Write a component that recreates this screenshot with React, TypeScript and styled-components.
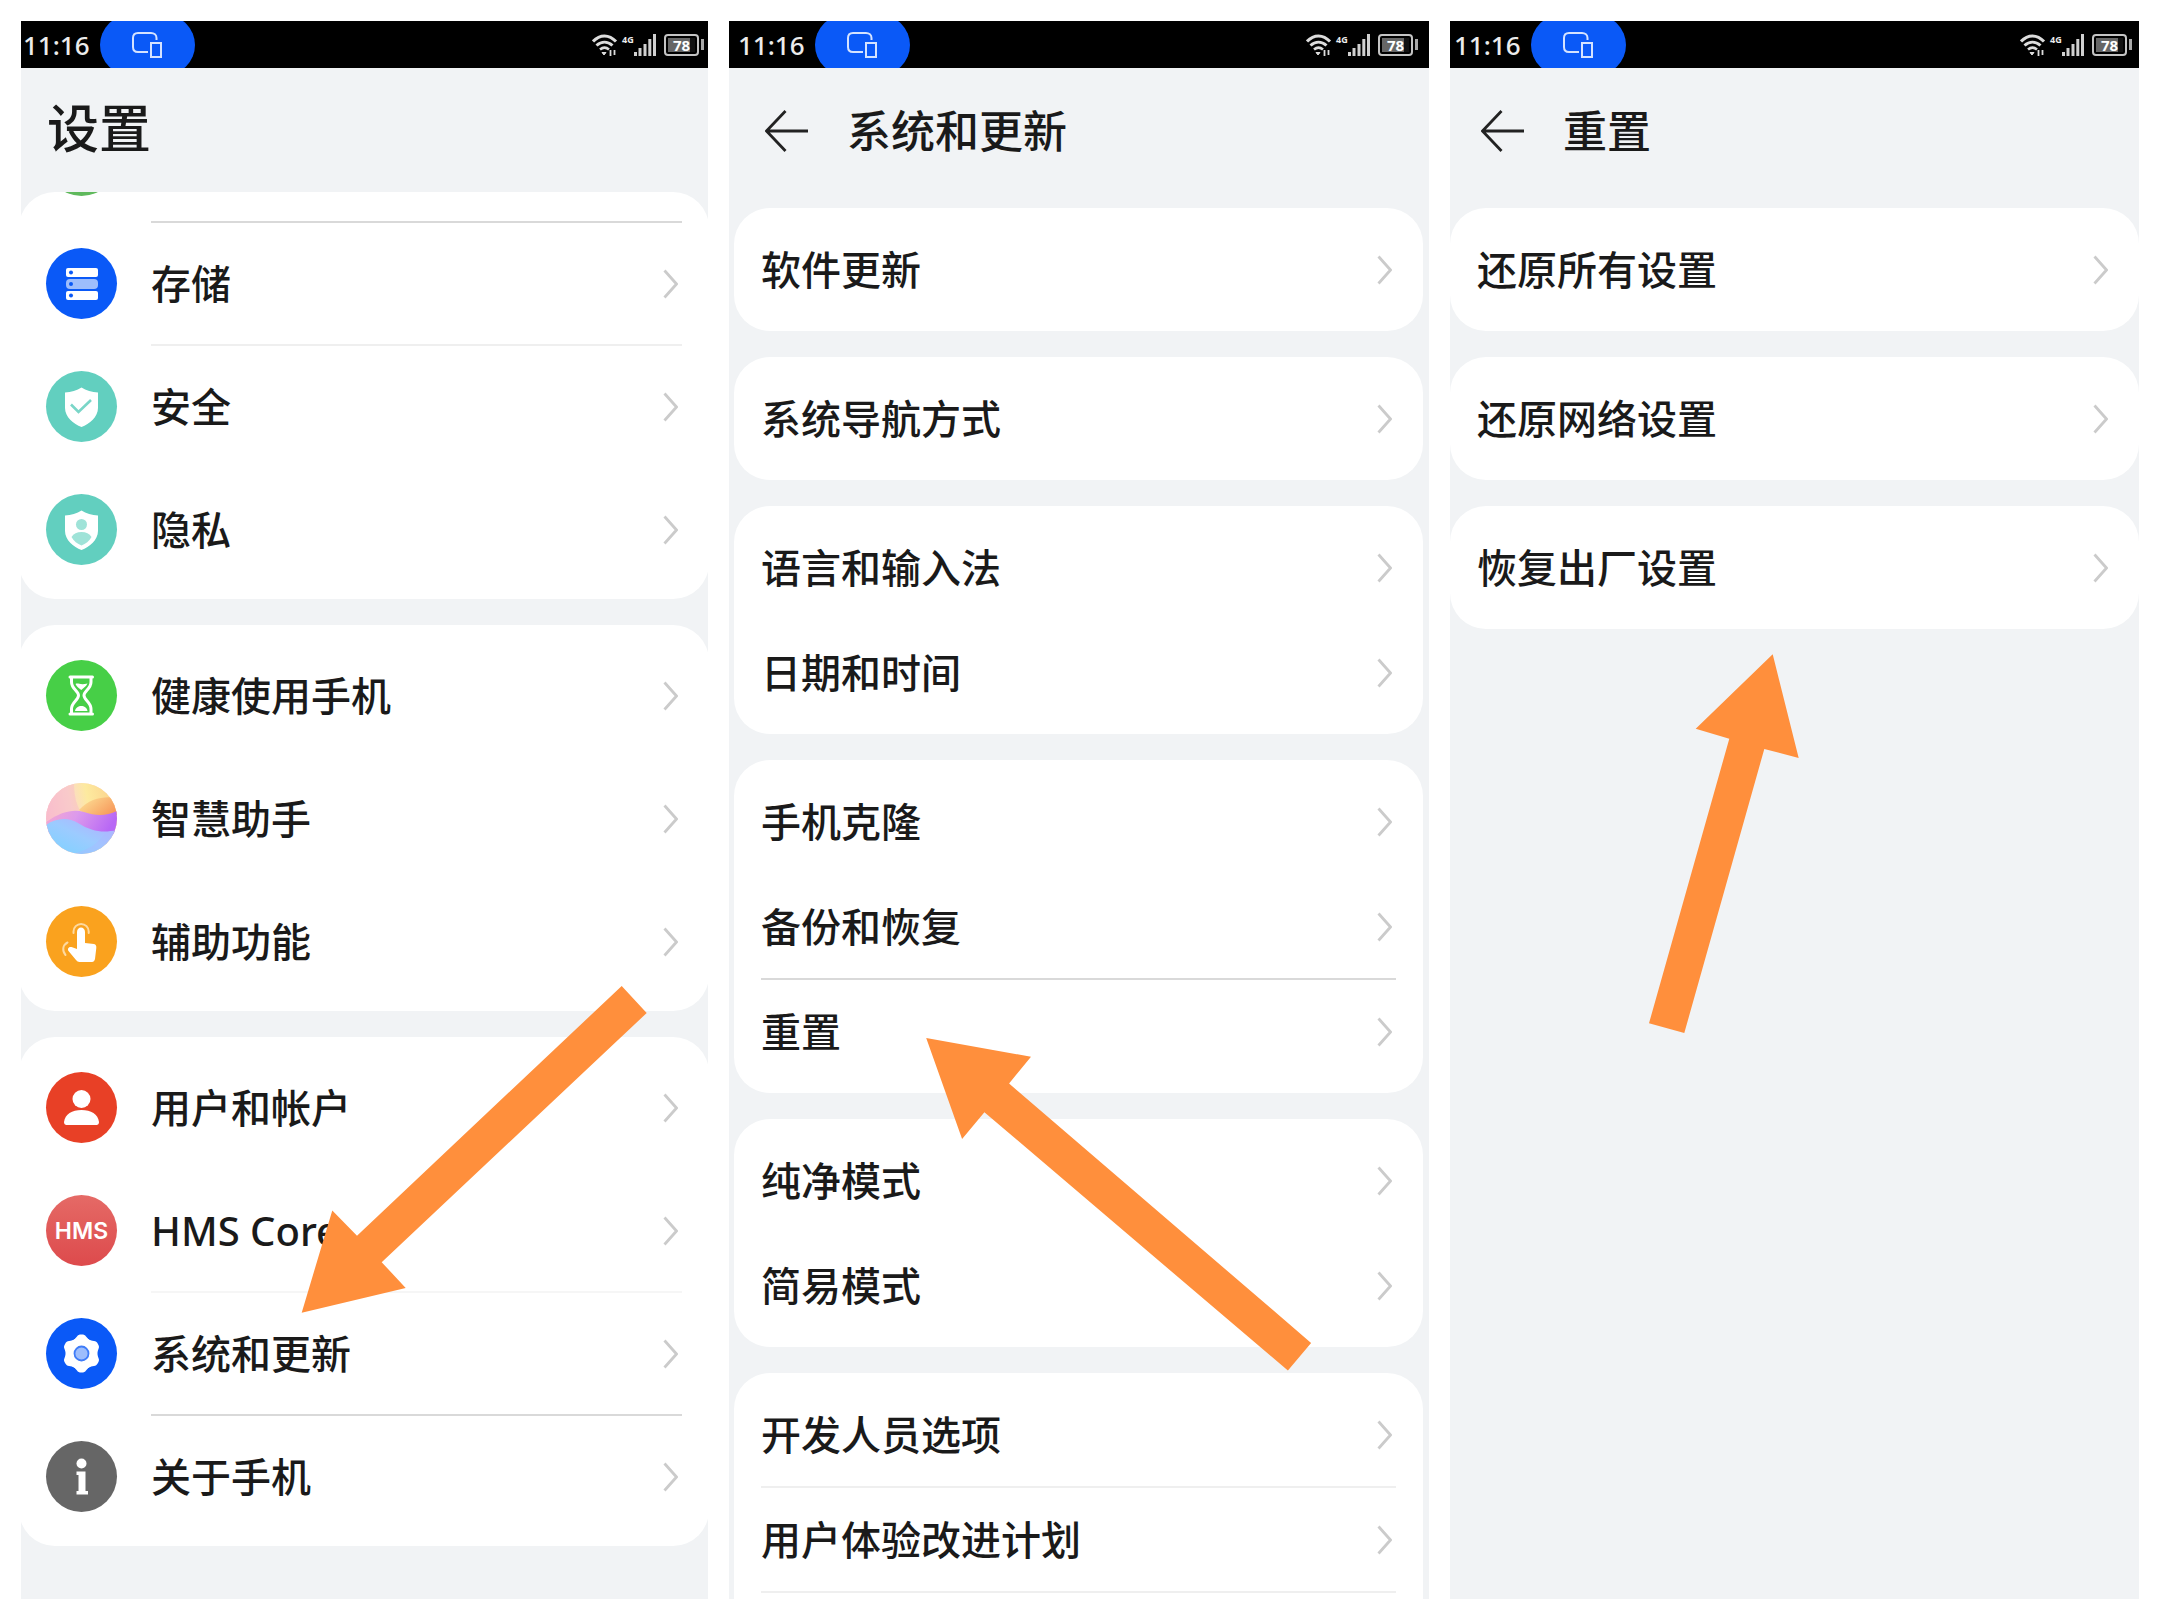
import React from "react";
import styled, { createGlobalStyle } from "styled-components";

const ink = "#1a1a1a";
const blue = "#0a59f7";
const teal = "#62cfbf";

const GlobalStyle = createGlobalStyle`
  *, *::before, *::after { box-sizing: border-box; }
  body {
    margin: 0;
    background: #ffffff;
    color: ${ink};
    font-family: "Noto Sans", "Noto Sans CJK SC", sans-serif;
  }
  button { font: inherit; color: inherit; }
`;

const Board = styled.main`
  display: grid;
  grid-template-columns: 687fr 700fr 689fr;
  gap: 21px;
  padding: 21px;
`;

const Phone = styled.section`
  position: relative;
  min-width: 0;
  overflow: hidden;
  background: #f1f3f5;
`;

const StatusBar = styled.div<{ $start: number; $end: number }>`
  display: flex;
  align-items: center;
  height: 47px;
  overflow: hidden;
  padding: 0 ${(p) => p.$end}px 0 ${(p) => p.$start}px;
  background: #000000;
  color: #ececec;
`;

const Clock = styled.time`
  font-size: 26px;
  font-weight: 500;
  line-height: 48px;
`;

const CastPill = styled.span`
  display: flex;
  flex: none;
  align-items: center;
  justify-content: center;
  width: 95px;
  height: 60px;
  margin-left: 10px;
  border-radius: 30px;
  background: ${blue};
`;

const Signals = styled.div`
  display: flex;
  align-items: center;
  margin-left: auto;
  height: 22px;
`;

const NetworkTag = styled.span`
  align-self: flex-start;
  width: 12px;
  margin-left: 4px;
  font-size: 9px;
  font-weight: 700;
  line-height: 12px;
`;

const Battery = styled.span`
  display: flex;
  align-items: center;
  justify-content: center;
  width: 35px;
  height: 22px;
  margin-left: 8px;
  border: 2px solid #c4c4c4;
  border-radius: 4px;
  background: linear-gradient(90deg, #666666 78%, #111111 78%);
  background-clip: content-box;
  padding: 2px;
  color: #ffffff;
  font-size: 15px;
  font-weight: 700;
  line-height: 14px;
`;

const BatteryCap = styled.span`
  width: 3px;
  height: 11px;
  margin-left: 2px;
  background: #a8a8a8;
`;

const RootHeader = styled.header`
  height: 124px;
  padding: 25px 26px 0;
`;

const PageHeader = styled.header<{ $start: number }>`
  display: flex;
  align-items: flex-start;
  gap: 38px;
  height: 140px;
  padding: 32px 26px 0 ${(p) => p.$start}px;
`;

const Title = styled.h1<{ $large?: boolean }>`
  margin: 0;
  font-size: ${(p) => (p.$large ? 52 : 44)}px;
  font-weight: 500;
  line-height: ${(p) => (p.$large ? 70 : 62)}px;
`;

const BackButton = styled.button`
  display: flex;
  align-items: center;
  height: 62px;
  padding: 0;
  border: 0;
  background: none;
`;

const CardStack = styled.div<{ $inset: string }>`
  display: flex;
  flex-direction: column;
  gap: 26px;
  margin: ${(p) => p.$inset};
`;

type Edge = "full" | "scrolled" | "cut";

const Card = styled.ul<{ $edge: Edge; $rowHeight: number }>`
  margin: 0;
  padding: ${(p) => (p.$edge === "scrolled" ? "0 0 8px" : p.$edge === "cut" ? "9px 0 7px" : p.$rowHeight > 105 ? "9px 0 8px" : "9px 0")};
  overflow: hidden;
  list-style: none;
  background: #ffffff;
  border-radius: ${(p) => (p.$edge === "cut" ? "36px 36px 0 0" : "36px")};

  /* a scrolled list keeps only the last 30px of its first row in view */
  & > li:first-child {
    margin-top: ${(p) => (p.$edge === "scrolled" ? 30 - p.$rowHeight : 0)}px;
  }
`;

const RowButton = styled.button<{ $height: number }>`
  display: flex;
  align-items: center;
  gap: 34px;
  width: 100%;
  height: ${(p) => p.$height}px;
  padding: 0 27px;
  border: 0;
  background: none;
  text-align: left;
`;

type Line = "none" | "faint" | "light" | "strong";
const lineColor: Record<Line, string> = {
  none: "transparent",
  faint: "#f6f6f6",
  light: "#efefef",
  strong: "#d9d9d9",
};

const RowBody = styled.span<{ $line: Line }>`
  display: flex;
  flex: 1;
  align-items: center;
  justify-content: space-between;
  align-self: stretch;
  padding-right: 4px;
  box-shadow: 0 1px 0 ${(p) => lineColor[p.$line]}, inset 0 -1px 0 ${(p) => lineColor[p.$line]};
`;

const Label = styled.span`
  font-size: 40px;
  font-weight: 500;
  line-height: 56px;
  white-space: nowrap;
`;

const Badge = styled.span<{ $fill: string }>`
  display: flex;
  flex: none;
  align-items: center;
  justify-content: center;
  width: 71px;
  height: 71px;
  overflow: hidden;
  border-radius: 50%;
  background: ${(p) => p.$fill};
  color: #ffffff;
`;

const BadgeText = styled.span`
  font-family: Inter, "Noto Sans", sans-serif;
  font-size: 23px;
  font-weight: 600;
  line-height: 30px;
`;

const Pointer = styled.svg<{ $left: number; $top: number }>`
  position: absolute;
  left: ${(p) => p.$left}px;
  top: ${(p) => p.$top}px;
  fill: #ff8f3c;
  pointer-events: none;
`;

const Glyph = ({ children }: { children: React.ReactNode }) => (
  <svg width="71" height="71" viewBox="0 0 71 71" fill="none" aria-hidden="true">
    {children}
  </svg>
);

const Chevron = () => (
  <svg width="15" height="30" viewBox="0 0 15 30" fill="none" aria-hidden="true">
    <path d="M1.5 1.5 13.5 15 1.5 28.5" stroke="#cbcbcb" strokeWidth="2.8" />
  </svg>
);

const shield = "M35.5 16.5C40 19.5 46 21 52 21.5V37C52 46 43.5 53 35.5 56C27.5 53 19 46 19 37V21.5C25 21 31 19.5 35.5 16.5Z";

const StorageIcon = () => (
  <Glyph>
    <rect x="20" y="20" width="32" height="9" rx="2" fill="#fff" />
    <rect x="20" y="31" width="32" height="10" rx="4" fill="#9dbdfc" />
    <rect x="20" y="43" width="32" height="9" rx="2" fill="#fff" />
    <circle cx="25" cy="24.5" r="2" fill={blue} />
    <circle cx="25" cy="36" r="2" fill={blue} />
    <circle cx="25" cy="47.5" r="2" fill={blue} />
  </Glyph>
);

const SecurityIcon = () => (
  <Glyph>
    <path d={shield} fill="#fff" />
    <path d="M25 33.5 32.5 41 45 29" stroke="#7ad6c8" strokeWidth="2.6" />
  </Glyph>
);

const PrivacyIcon = () => (
  <Glyph>
    <path d={shield} fill="#fff" />
    <circle cx="35.5" cy="30.5" r="5.5" fill="#9fe3d8" />
    <path d="M25.5 43C27.5 39.5 31 38 35.5 38S43.5 39.5 45.5 43C43.5 47 39.5 50 35.5 51.5C31.5 50 27.5 47 25.5 43Z" fill="#9fe3d8" />
  </Glyph>
);

const HourglassIcon = () => (
  <Glyph>
    <path
      d="M24 17H46.5M24 54H46.5M25.5 17V22C25.5 29 32.5 31 32.5 35.5S25.5 42 25.5 49V54M45 17V22C45 29 38 31 38 35.5S45 42 45 49V54"
      stroke="#fff"
      strokeWidth="3"
      strokeLinecap="round"
    />
    <path d="M29.5 24C32 22.5 34 25.5 41.5 23.5C40 27 37 28 35.3 30C33 28 31 27 29.5 24Z" fill="#fff" />
    <path d="M29 51C29.5 47.5 32.5 46 35.3 46S41 47.5 41.5 51Z" fill="#fff" />
  </Glyph>
);

const AssistantIcon = () => (
  <Glyph>
    <defs>
      <linearGradient id="orbTop" x1="0" y1="0.4" x2="1" y2="0.2">
        <stop offset="0" stopColor="#fbc3d0" />
        <stop offset="0.35" stopColor="#fbd9cc" />
        <stop offset="0.6" stopColor="#fdea9f" />
        <stop offset="1" stopColor="#fbd08a" />
      </linearGradient>
      <linearGradient id="orbSun" x1="0" y1="0" x2="1" y2="0.6">
        <stop offset="0" stopColor="#fde59a" />
        <stop offset="1" stopColor="#f79a5c" />
      </linearGradient>
      <linearGradient id="orbBand" x1="0" y1="0" x2="1" y2="0.2">
        <stop offset="0" stopColor="#f5a8cf" />
        <stop offset="0.45" stopColor="#dc9aec" />
        <stop offset="1" stopColor="#b868f5" />
      </linearGradient>
      <linearGradient id="orbSea" x1="0" y1="1" x2="1" y2="0">
        <stop offset="0" stopColor="#7ad3ff" />
        <stop offset="0.5" stopColor="#9ccbff" />
        <stop offset="1" stopColor="#b9a8ff" />
      </linearGradient>
    </defs>
    <rect width="71" height="71" fill="url(#orbTop)" />
    <path d="M28 0C28 14 31 24 36 30C26 28 12 32 0 38V0Z" fill="#f7b5c8" opacity="0.4" />
    <path d="M33 27C44 15 58 13 71 15V32C56 35 42 33 33 27Z" fill="url(#orbSun)" />
    <path d="M0 39C16 28 28 26 38 29C50 33 60 33 71 28V52H0Z" fill="url(#orbBand)" />
    <path d="M0 42C10 35 22 34 32 40C46 49 58 50 71 47V71H0Z" fill="url(#orbSea)" />
    <path d="M24 71C44 68 54 58 60 49C64 49 68 48 71 47V71Z" fill="#a9b8ff" opacity="0.4" />
  </Glyph>
);

const TouchIcon = () => (
  <Glyph>
    <path
      d="M31 26C31 20 39 20 39 26V37L48 38C50 38.5 50.5 40 50.3 42L49 53C48.5 55 47.5 56 46 56H33.5C32 56 31 55 30 54L22.5 45C21 42.5 23 40.5 25.5 41L31 43Z"
      fill="#fff"
    />
    <path d="M27.5 27V25.5A7.6 7.6 0 0 1 42.7 25.5V27" stroke="#fdd9a0" strokeWidth="2" strokeLinecap="round" />
    <path d="M21.5 36.5C16.5 39 16 45 19.5 49" stroke="#fdd9a0" strokeWidth="2" strokeLinecap="round" />
  </Glyph>
);

const UserIcon = () => (
  <Glyph>
    <circle cx="35.5" cy="27" r="9" fill="#fff" />
    <path d="M18 50C19 42 26 38 35.5 38S52 42 53 50C53 52 52 53 50.5 53H20.5C19 53 18 52 18 50Z" fill="#fff" />
  </Glyph>
);

const GearIcon = () => (
  <Glyph>
    <circle cx="35.5" cy="35.5" r="16" fill="#fff" />
    {[0, 60, 120, 180, 240, 300].map((turn) => (
      <path
        key={turn}
        d="M27 23 31 18.500C32 17 33 16.500 35.500 16.500S39 17 40 18.500L44 23Z"
        fill="#fff"
        transform={`rotate(${turn} 35.5 35.5)`}
      />
    ))}
    <circle cx="35.5" cy="35.5" r="7" fill="#9dbdfc" stroke="#3f7cf8" strokeWidth="1.8" />
  </Glyph>
);

const InfoIcon = () => (
  <Glyph>
    <circle cx="35.5" cy="22.5" r="5" fill="#fff" />
    <path d="M30.5 30.5H39.5V50H42V53.5H30.5V50H32.5V34H30.5Z" fill="#fff" />
  </Glyph>
);

const Status = ({ start, end }: { start: number; end: number }) => (
  <StatusBar $start={start} $end={end}>
    <Clock>11:16</Clock>
    <CastPill>
      <svg width="32" height="26" viewBox="0 0 32 26" fill="none" stroke="#d5e3ff" strokeWidth="2" aria-hidden="true">
        <path d="M17 20H7C4 20 2 18 2 15V6C2 3 4 1 7 1H20C23 1 25.5 3 25.5 6V8" />
        <rect x="20" y="11" width="10" height="14" />
      </svg>
    </CastPill>
    <Signals>
      <svg width="26" height="22" viewBox="0 0 26 22" fill="none" stroke="#dcdcdc" strokeWidth="3" aria-hidden="true">
        <path d="M1 7.5C8 0 17 0 24 7.5" />
        <path d="M4.500 11.500C9.500 7 15.500 7 20.500 11.500" />
        <path d="M8 15.500C11 13 14 13 17 15.500" strokeWidth="2.600" />
        <path d="M10 18.500H14L12 21Z" fill="#dcdcdc" strokeWidth="1" />
        <path d="M18.500 16V22M22.500 16V21" strokeWidth="1.800" />
      </svg>
      <NetworkTag>4G</NetworkTag>
      <svg width="22" height="22" viewBox="0 0 22 22" fill="#d0d0d0" aria-hidden="true">
        <rect x="0" y="18" width="3" height="4" />
        <rect x="4.500" y="14" width="3" height="8" />
        <rect x="9.500" y="10" width="3" height="12" />
        <rect x="14.300" y="5" width="3" height="17" />
        <rect x="19" y="0" width="3" height="22" />
      </svg>
      <Battery>78</Battery>
      <BatteryCap />
    </Signals>
  </StatusBar>
);

type Item = { label?: string; icon?: React.ReactNode; fill?: string; line?: Line };
type Group = { items: Item[]; edge?: Edge };

const Groups = ({ groups, rowHeight, inset }: { groups: Group[]; rowHeight: number; inset: string }) => (
  <CardStack $inset={inset}>
    {groups.map((group, g) => (
      <Card key={g} $edge={group.edge ?? "full"} $rowHeight={rowHeight}>
        {group.items.map((item, i) => (
          <li key={i}>
            <RowButton type="button" $height={rowHeight}>
              {item.fill && <Badge $fill={item.fill}>{item.icon}</Badge>}
              <RowBody $line={item.line ?? "none"}>
                {item.label && <Label>{item.label}</Label>}
                {item.label && <Chevron />}
              </RowBody>
            </RowButton>
          </li>
        ))}
      </Card>
    ))}
  </CardStack>
);

const Back = () => (
  <BackButton type="button" aria-label="返回">
    <svg width="44" height="42" viewBox="0 0 44 42" fill="none" stroke="#222" strokeWidth="2.8" aria-hidden="true">
      <path d="M1 21H43M20.5 1 1.5 21 20.5 41" />
    </svg>
  </BackButton>
);

const settings: Group[] = [
  {
    edge: "scrolled",
    items: [
      { fill: "#5fb95c", line: "strong" },
      { label: "存储", fill: blue, icon: <StorageIcon />, line: "light" },
      { label: "安全", fill: teal, icon: <SecurityIcon /> },
      { label: "隐私", fill: teal, icon: <PrivacyIcon /> },
    ],
  },
  {
    items: [
      { label: "健康使用手机", fill: "#47cf47", icon: <HourglassIcon /> },
      { label: "智慧助手", fill: "#fbd9cc", icon: <AssistantIcon /> },
      { label: "辅助功能", fill: "#faa21e", icon: <TouchIcon /> },
    ],
  },
  {
    items: [
      { label: "用户和帐户", fill: "#e84026", icon: <UserIcon /> },
      { label: "HMS Core", fill: "linear-gradient(#e56a66, #dd4a4c)", icon: <BadgeText>HMS</BadgeText>, line: "faint" },
      { label: "系统和更新", fill: blue, icon: <GearIcon />, line: "strong" },
      { label: "关于手机", fill: "#666666", icon: <InfoIcon /> },
    ],
  },
];

const system: Group[] = [
  { items: [{ label: "软件更新" }] },
  { items: [{ label: "系统导航方式" }] },
  { items: [{ label: "语言和输入法" }, { label: "日期和时间" }] },
  { items: [{ label: "手机克隆" }, { label: "备份和恢复", line: "strong" }, { label: "重置" }] },
  { items: [{ label: "纯净模式" }, { label: "简易模式" }] },
  { edge: "cut", items: [{ label: "开发人员选项", line: "light" }, { label: "用户体验改进计划", line: "light" }] },
];

const reset: Group[] = [
  { items: [{ label: "还原所有设置" }] },
  { items: [{ label: "还原网络设置" }] },
  { items: [{ label: "恢复出厂设置" }] },
];

export default function App() {
  return (
    <>
      <GlobalStyle />
      <Board>
        <Phone>
          <Status start={2} end={4} />
          <RootHeader>
            <Title $large>设置</Title>
          </RootHeader>
          <Groups groups={settings} rowHeight={123} inset="0 -1px 0 -2px" />
          <Pointer $left={280} $top={965} width="346" height="328" viewBox="0 0 346 328" aria-hidden="true">
            <polygon points="0.7,326.7 31.3,224.4 56,249.7 320.7,0 345.7,27 80.7,276.2 104.7,301.9" />
          </Pointer>
        </Phone>

        <Phone>
          <Status start={9} end={11} />
          <PageHeader $start={36}>
            <Back />
            <Title>系统和更新</Title>
          </PageHeader>
          <Groups groups={system} rowHeight={105} inset="0 6px 0 5px" />
          <Pointer $left={197} $top={1017} width="386" height="334" viewBox="0 0 386 334" aria-hidden="true">
            <polygon points="0.2,0 105,18.7 83.1,45.5 385.1,304.9 361.9,332.6 58.4,74.2 36.1,101" />
          </Pointer>
        </Phone>

        <Phone>
          <Status start={4} end={7} />
          <PageHeader $start={31}>
            <Back />
            <Title>重置</Title>
          </PageHeader>
          <Groups groups={reset} rowHeight={105} inset="0" />
          <Pointer $left={199} $top={633} width="150" height="380" viewBox="0 0 150 380" aria-hidden="true">
            <polygon points="123.7,0.3 149.7,104 115.3,95 35.3,379 0,369.3 80.3,84.7 46.7,74.7" />
          </Pointer>
        </Phone>
      </Board>
    </>
  );
}
